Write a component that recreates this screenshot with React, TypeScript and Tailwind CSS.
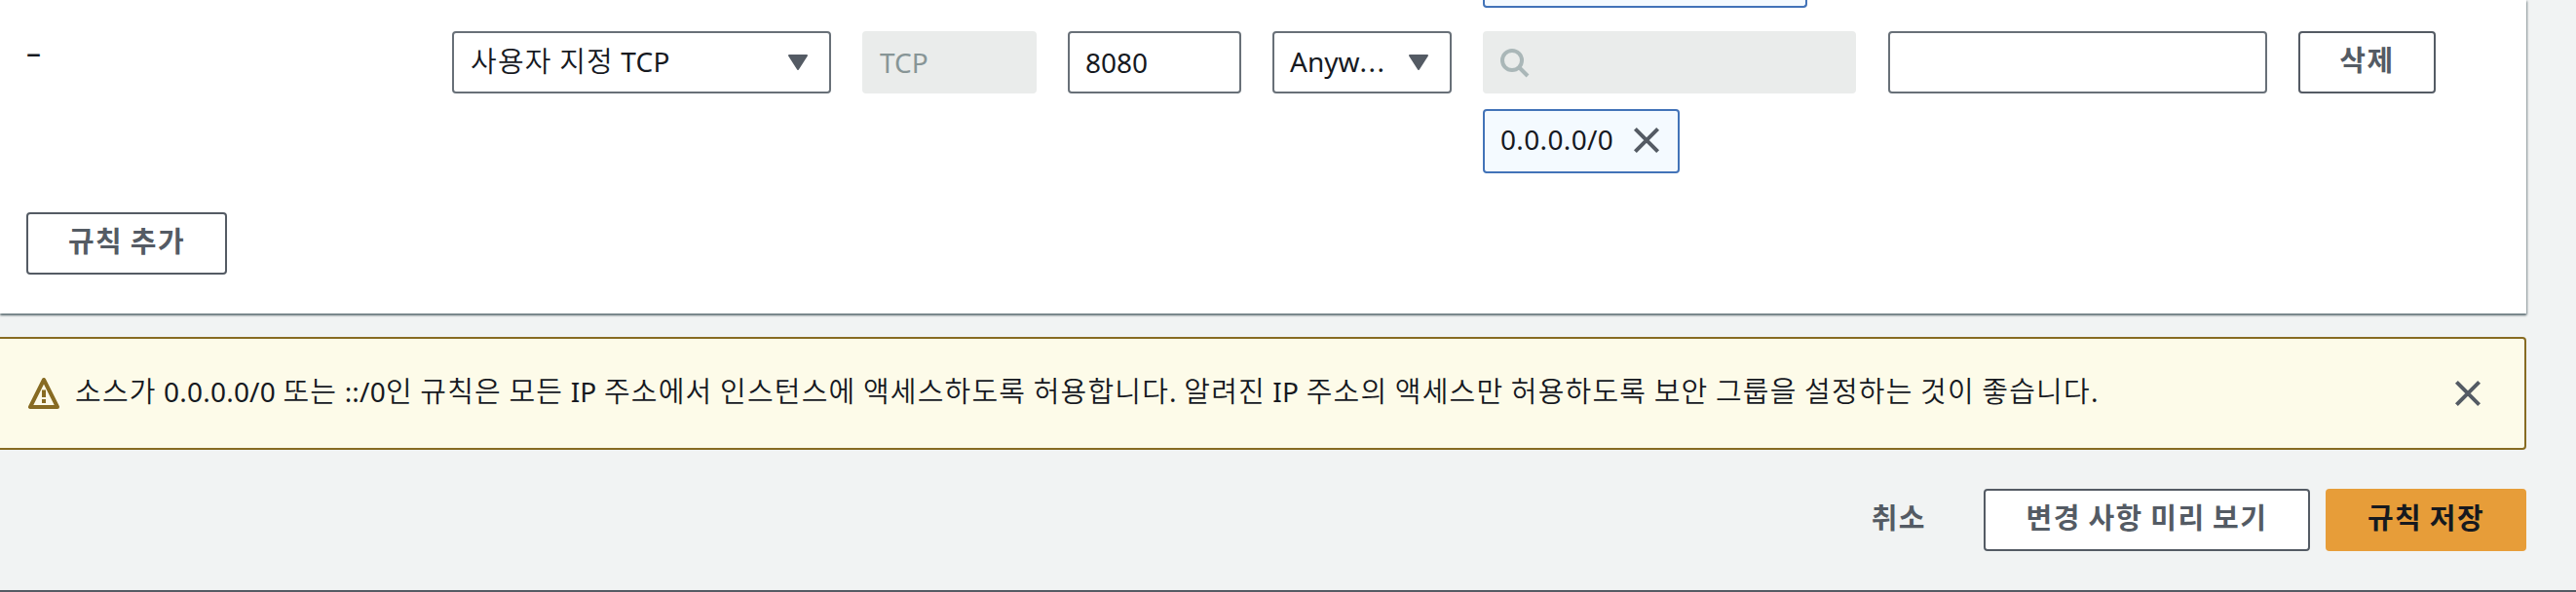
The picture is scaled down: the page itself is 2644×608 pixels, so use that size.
import React from "react";

const Caret = () => (
  <svg width="20" height="16" viewBox="0 0 20 16" className="shrink-0" fill="#545b64" stroke="#545b64" strokeWidth="2" strokeLinejoin="round">
    <path d="M1 1h18L10 15z" />
  </svg>
);

const Close = () => (
  <svg width="28" height="28" viewBox="0 0 28 28" className="shrink-0" fill="none" stroke="#545b64" strokeWidth="4">
    <path d="M2.4 2.4l23.2 23.2M25.6 2.4L2.4 25.6" />
  </svg>
);

const Search = () => (
  <svg width="32" height="32" viewBox="0 0 32 32" fill="none" stroke="#aab7b8" strokeWidth="4">
    <circle cx="14" cy="14" r="10" />
    <path d="M21 21l9 9" />
  </svg>
);

const Warning = () => (
  <svg width="32" height="32" viewBox="0 0 32 32" className="shrink-0" fill="none" stroke="#876b22" strokeWidth="4" strokeLinejoin="round">
    <path d="M16 2L2 30h28z" />
    <path d="M16 12.5v7.5M16 22v4" />
  </svg>
);

// Sets Hangul runs slightly larger and wider than the Latin text around them.
const Text = ({ children, bold = false }: { children: string; bold?: boolean }) => (
  <span className="tracking-[0.2px] whitespace-pre">
    {children.split(/([가-힣]+)/).map((part, i) =>
      i % 2 ? (
        <span
          key={i}
          className={
            bold
              ? "text-[29px] leading-none font-bold tracking-[1.5px]"
              : "text-[29px] leading-none font-[350] tracking-[1.2px]"
          }
        >
          {part}
        </span>
      ) : (
        part
      )
    )}
  </span>
);

const field = "h-16 shrink-0 rounded-[4px] border-2 border-[#687078] bg-white flex items-center";
const button = "h-16 shrink-0 rounded-[4px] border-2 border-[#545b64] bg-white flex items-center justify-center pb-1 text-[#545b64]";

export default function App() {
  return (
    <div className="flex h-[608px] w-[2644px] flex-col overflow-hidden border-b-2 border-[#545b64] bg-[#f1f3f3] text-[28px] leading-[44px] text-[#16191f] [font-family:'Noto_Sans','Noto_Sans_CJK_KR',sans-serif]">
      <section className="h-[322px] w-[2593px] shrink-0 bg-white pl-[27px] shadow-[0_2px_2px_rgba(0,28,36,0.5),1px_1px_2px_rgba(0,28,36,0.3)]">
        <div className="ml-[1495px] h-2 w-[333px] rounded-b-[4px] border-2 border-t-0 border-[#4273b8] bg-[#f4faff]" />
        <div className="mt-6 flex h-[186px] items-start">
          <div className="w-[437px] shrink-0 text-[30px] leading-[44px]">–</div>
          <div className={`${field} w-[389px] justify-between pr-[22px] pl-[17px]`}>
            <span className="pb-[3px]">
              <Text>사용자 지정 TCP</Text>
            </span>
            <Caret />
          </div>
          <div className="ml-8 flex h-16 w-[179px] shrink-0 items-center rounded-[4px] bg-[#eaeceb] pl-[18px] text-[#879596]">TCP</div>
          <div className={`${field} ml-8 w-[178px] pl-4`}>8080</div>
          <div className={`${field} ml-8 w-[184px] justify-between pr-[22px] pl-4`}>
            <span className="pb-0.5">
              Anyw<span className="tracking-[1.5px]">...</span>
            </span>
            <Caret />
          </div>
          <div className="ml-8 flex w-[383px] shrink-0 flex-col items-start gap-4">
            <div className="flex h-16 w-full items-center rounded-[4px] bg-[#eaeceb] pl-4">
              <Search />
            </div>
            <div className="flex h-[66px] w-[202px] items-center justify-between rounded-[4px] border-2 border-[#4273b8] bg-[#f4faff] pr-[18px] pb-0.5 pl-4">
              <span className="pb-0.5 tracking-[0.35px]">0.0.0.0/0</span>
              <Close />
            </div>
          </div>
          <div className={`${field} ml-[33px] w-[389px]`} />
          <button className={`${button} ml-8 w-[141px]`}>
            <Text bold>삭제</Text>
          </button>
        </div>
        <button className={`${button} w-[206px]`}>
          <Text bold>규칙 추가</Text>
        </button>
      </section>
      <section className="mt-6 flex h-[116px] w-[2593px] shrink-0 items-center rounded-r-[4px] border-2 border-l-0 border-[#876b22] bg-[#fdfbe9] pr-[44px] pl-[29px]">
        <Warning />
        <p className="ml-4 flex-1 pb-1">
          <Text>
            소스가 0.0.0.0/0 또는 ::/0인 규칙은 모든 IP 주소에서 인스턴스에 액세스하도록 허용합니다. 알려진 IP 주소의 액세스만 허용하도록 보안 그룹을 설정하는 것이 좋습니다.
          </Text>
        </p>
        <Close />
      </section>
      <footer className="mt-10 flex w-[2593px] items-center justify-end">
        <button className="mr-[59px] pb-1 text-[#545b64]">
          <Text bold>취소</Text>
        </button>
        <button className={`${button} w-[335px]`}>
          <Text bold>변경 사항 미리 보기</Text>
        </button>
        <button className="ml-4 h-16 w-[206px] rounded-[4px] bg-[#e79d39] pb-1 text-[#16191f]">
          <Text bold>규칙 저장</Text>
        </button>
      </footer>
    </div>
  );
}
